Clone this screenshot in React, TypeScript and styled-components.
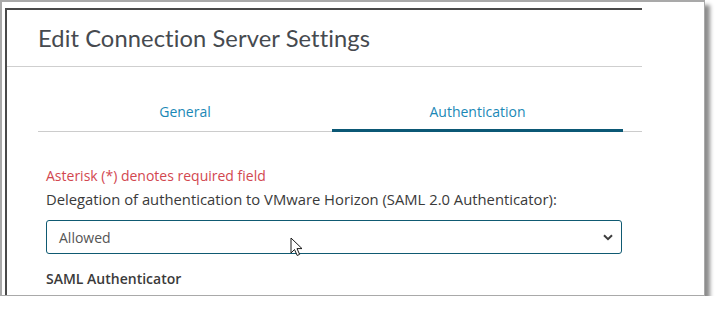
import { createGlobalStyle } from "styled-components"
import styled from "styled-components"

const GlobalStyle = createGlobalStyle`
  html, body {
    margin: 0;
    padding: 0;
    background: #ffffff;
  }
  body {
    font-family: "Open Sans", "Liberation Sans", sans-serif;
  }
`

const Frame = styled.div`
  box-sizing: border-box;
  width: 705px;
  height: 296px;
  background: #ffffff;
  border: 1px solid #a9a9a9;
  border-top-width: 2px;
  border-left-width: 2px;
  box-shadow: 5px 5px 4px rgba(0, 0, 0, 0.45);
  padding: 6px 0 0 3px;
  overflow: hidden;
`

const Dialog = styled.div`
  box-sizing: border-box;
  width: 637px;
  height: 300px;
  border-top: 2px solid #4a4a4a;
  border-left: 2px solid #4a4a4a;
  background: #ffffff;
`

const Header = styled.div`
  height: 56px;
  display: flex;
  align-items: center;
  padding-left: 31px;
  border-bottom: 1px solid #cfcfcf;
`

const Title = styled.h3`
  margin: 0;
  font-family: "Lato", "Liberation Sans", sans-serif;
  font-weight: 400;
  font-size: 23.7px;
  color: #464a4f;
  letter-spacing: 0.1px;
`

const TabStrip = styled.div`
  display: flex;
  margin: 26px 0 0 31px;
  width: 604px;
  border-bottom: 1px solid #cccccc;
`

const Tab = styled.div<{ $active?: boolean; $width: number }>`
  box-sizing: border-box;
  width: ${({ $width }) => $width}px;
  height: 39px;
  margin-bottom: -1px;
  display: flex;
  align-items: center;
  justify-content: center;
  font-size: 14px;
  color: #1a88b6;
  border-bottom: 3px solid ${({ $active }) => ($active ? "#0b5875" : "transparent")};
`

const Body = styled.div`
  padding: 34px 0 0 39px;
  display: flex;
  flex-direction: column;
`

const Required = styled.div`
  font-size: 14px;
  line-height: 20px;
  color: #d2474f;
`

const Label = styled.div<{ $bold?: boolean }>`
  font-size: ${({ $bold }) => ($bold ? "14px" : "14.8px")};
  line-height: 20px;
  margin-top: 3px;
  color: #3a3a3a;
  font-weight: ${({ $bold }) => ($bold ? 600 : 400)};
`

const SelectBox = styled.div`
  position: relative;
  box-sizing: border-box;
  width: 576px;
  height: 34px;
  margin: 11px 0 12px;
  border: 1px solid #0f5a72;
  border-radius: 3px;
  display: flex;
  align-items: center;
  justify-content: space-between;
  padding: 0 8px 0 12px;
  font-size: 14px;
  color: #555555;
`

const Cursor = styled.svg`
  position: absolute;
  left: 243px;
  top: 16px;
`

const Chevron = () => (
  <svg width="10" height="7" viewBox="0 0 10 7">
    <path d="M1 1.2 L5 5.2 L9 1.2" fill="none" stroke="#3d3d3d" strokeWidth="2" />
  </svg>
)

export default function App() {
  return (
    <>
      <GlobalStyle />
      <Frame>
        <Dialog>
          <Header>
            <Title>Edit Connection Server Settings</Title>
          </Header>
          <TabStrip>
            <Tab $width={294}>General</Tab>
            <Tab $width={291} $active>
              Authentication
            </Tab>
          </TabStrip>
          <Body>
            <Required>Asterisk (*) denotes required field</Required>
            <Label>Delegation of authentication to VMware Horizon (SAML 2.0 Authenticator):</Label>
            <SelectBox>
              <span>Allowed</span>
              <Chevron />
              <Cursor width="14" height="20" viewBox="0 0 14 20">
                <path
                  d="M1 1 L1 16 L4.5 12.5 L7.2 18.5 L9.6 17.4 L7 11.6 L12 11.6 Z"
                  fill="#ffffff"
                  stroke="#1a1a1a"
                  strokeWidth="1"
                  strokeLinejoin="round"
                />
              </Cursor>
            </SelectBox>
            <Label $bold>SAML Authenticator</Label>
          </Body>
        </Dialog>
      </Frame>
    </>
  )
}
